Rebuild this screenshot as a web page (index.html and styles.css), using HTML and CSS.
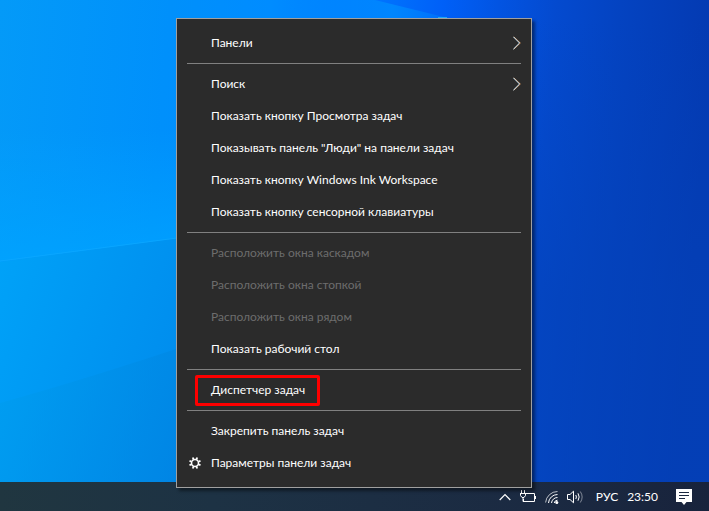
FILE: index.html
```html
<!DOCTYPE html>
<html lang="ru">
<head>
<meta charset="utf-8">
<title>Панель задач</title>
<link rel="stylesheet" href="styles.css">
</head>
<body>
<main class="desktop">
  <svg class="wallpaper" viewBox="0 0 709 482" preserveAspectRatio="none" aria-hidden="true">
    <defs>
      <linearGradient id="base" x1="0" x2="709" y1="0" y2="60" gradientUnits="userSpaceOnUse">
        <stop offset="0" stop-color="#049af8"/>
        <stop offset=".24" stop-color="#0090fb"/>
        <stop offset=".38" stop-color="#008cff"/>
        <stop offset=".5" stop-color="#007aff"/>
        <stop offset=".62" stop-color="#0060f8"/>
        <stop offset=".7" stop-color="#0254e2"/>
        <stop offset=".78" stop-color="#044acf"/>
        <stop offset=".87" stop-color="#0443c1"/>
        <stop offset="1" stop-color="#043ab2"/>
      </linearGradient>
      <linearGradient id="shade" x1="0" x2="0" y1="20" y2="300" gradientUnits="userSpaceOnUse">
        <stop offset="0" stop-color="#0442b8" stop-opacity="0"/>
        <stop offset="1" stop-color="#0442b8" stop-opacity=".6"/>
      </linearGradient>
      <linearGradient id="glow" x1="0" x2="0" y1="130" y2="255" gradientUnits="userSpaceOnUse">
        <stop offset="0" stop-color="#00a4ff" stop-opacity="0"/>
        <stop offset="1" stop-color="#00a4ff" stop-opacity=".75"/>
      </linearGradient>
      <linearGradient id="lower" x1="0" x2="300" y1="250" y2="350" gradientUnits="userSpaceOnUse">
        <stop offset="0" stop-color="#00a2f8"/>
        <stop offset="1" stop-color="#0082e8"/>
      </linearGradient>
      <linearGradient id="floor" x1="0" x2="200" y1="400" y2="460" gradientUnits="userSpaceOnUse">
        <stop offset="0" stop-color="#009cec"/>
        <stop offset="1" stop-color="#007edc"/>
      </linearGradient>
      <linearGradient id="beam" x1="280" x2="440" y1="0" y2="0" gradientUnits="userSpaceOnUse">
        <stop offset="0" stop-color="#0090ff" stop-opacity="0"/>
        <stop offset=".7" stop-color="#008cff" stop-opacity=".8"/>
        <stop offset="1" stop-color="#0088ff" stop-opacity=".4"/>
      </linearGradient>
    </defs>
    <rect width="709" height="482" fill="url(#base)"/>
    <rect x="530" y="20" width="179" height="462" fill="url(#shade)"/>
    <path d="M280 0H375L448 18H280Z" fill="url(#beam)"/>
    <path d="M438 18H447" stroke="#20a8f8" stroke-width="2"/>
    <path d="M0 100H400V210L0 262Z" fill="url(#glow)"/>
    <path d="M0 262L400 209V482H0Z" fill="url(#lower)"/>
    <path d="M0 403Q90 378 200 341V482H0Z" fill="url(#floor)" opacity=".5"/>
    <path d="M0 261L200 235" stroke="#10aaff" stroke-width="1" opacity=".6"/>
  </svg>

  <nav class="menu" aria-label="Меню панели задач">
    <button class="item" type="button"><span class="label">Панели</span>
      <svg class="chevron" viewBox="0 0 8 14"><path d="M.8 .8L7.300 7L.8 13.200" stroke="#f0a060"/><path d="M.3 .8L6.500 7L.3 13.200" stroke="#bfe6ff"/></svg></button>
    <hr class="rule">
    <button class="item" type="button"><span class="label">Поиск</span>
      <svg class="chevron" viewBox="0 0 8 14"><path d="M.8 .8L7.300 7L.8 13.200" stroke="#f0a060"/><path d="M.3 .8L6.500 7L.3 13.200" stroke="#bfe6ff"/></svg></button>
    <button class="item" type="button"><span class="label">Показать кнопку Просмотра задач</span></button>
    <button class="item" type="button"><span class="label">Показывать панель "Люди" на панели задач</span></button>
    <button class="item" type="button"><span class="label">Показать кнопку Windows Ink Workspace</span></button>
    <button class="item" type="button"><span class="label">Показать кнопку сенсорной клавиатуры</span></button>
    <hr class="rule">
    <button class="item" type="button" disabled><span class="label">Расположить окна каскадом</span></button>
    <button class="item" type="button" disabled><span class="label">Расположить окна стопкой</span></button>
    <button class="item" type="button" disabled><span class="label">Расположить окна рядом</span></button>
    <button class="item" type="button"><span class="label">Показать рабочий стол</span></button>
    <hr class="rule">
    <button class="item" type="button"><span class="label marked">Диспетчер задач</span></button>
    <hr class="rule">
    <button class="item" type="button"><span class="label">Закрепить панель задач</span></button>
    <button class="item" type="button">
      <svg class="gear" viewBox="0 0 12 12"><g fill="none" stroke="#fff"><circle cx="6" cy="6" r="3.500" stroke-width="1.600"/><path d="M7.500 2.300L8.200 .5M9.700 4.500L11.500 3.800M9.700 7.500L11.500 8.200M7.500 9.700L8.200 11.500M4.500 9.700L3.800 11.500M2.300 7.500L.5 8.200M2.300 4.500L.5 3.800M4.500 2.300L3.800 .5" stroke-width="1.800"/></g></svg>
      <span class="label">Параметры панели задач</span></button>
  </nav>
</main>

<footer class="taskbar">
  <button class="tray" type="button" aria-label="Скрытые значки">
    <svg width="12" height="8" viewBox="0 0 12 8"><path d="M.7 7L6 1.500L11.300 7" fill="none" stroke="#fff" stroke-width="1.200"/></svg></button>
  <button class="tray" type="button" aria-label="Батарея">
    <svg width="18" height="14" viewBox="0 0 18 14"><g fill="none" stroke="#fff"><path d="M7 3.500H15.500V11.500H4.500V9"/><path d="M16.500 6V9"/><path d="M2.500 0V3M5.500 0V3"/><path d="M1 3.500H7M1.500 3V5.500L3 7.500H5L6.500 5.500V3M4 7V11.500H5"/></g></svg></button>
  <button class="tray" type="button" aria-label="Сеть">
    <svg width="14" height="14" viewBox="0 0 14 14"><g fill="none" stroke="#fff"><path d="M.6 12.500A12 12 0 0 1 12.500 1.500" opacity=".7"/><path d="M3.500 13A9 9 0 0 1 12.500 4.500"/><path d="M6.500 13A6 6 0 0 1 12.500 7.500"/><path d="M9.200 13A3.500 3.500 0 0 1 12.500 10.200"/></g><circle cx="11.800" cy="12.400" r="1.500" fill="#fff"/></svg></button>
  <button class="tray" type="button" aria-label="Громкость">
    <svg width="17" height="14" viewBox="0 0 17 14"><g fill="none" stroke="#fff"><path d="M.5 4.500H3L6.500 1.200V12.800L3 9.500H.5Z"/><path d="M8.800 5Q10 7 8.800 9M11 3.300Q13.300 7 11 10.700"/><path d="M13.300 1.500Q17 7 13.300 12.500" opacity=".45"/></g></svg></button>
  <button class="tray language" type="button">РУС</button>
  <button class="tray" type="button">23:50</button>
  <button class="tray notes" type="button" aria-label="Уведомления">
    <svg width="16" height="16" viewBox="0 0 16 16"><path d="M0 0H16V13H10.500L8 16L5.500 13H0Z" fill="#fff"/><path d="M3 3.500H13M3 6.500H13M3 9.500H9" stroke="#1a2740"/></svg></button>
</footer>
</body>
</html>
```

FILE: styles.css
```css
* {
  box-sizing: border-box;
}

body {
  margin: 0;
  min-height: 100vh;
  display: flex;
  flex-direction: column;
  position: relative;
  overflow: hidden;
  background: #1a2740;
  color: #fff;
  font: 12px/16px Lato, "Noto Sans", sans-serif;
}

button {
  border: 0;
  padding: 0;
  background: none;
  color: inherit;
  font: inherit;
}

.desktop {
  flex: 1;
  display: flex;
}

.wallpaper {
  position: absolute;
  top: 0;
  left: 0;
  width: 100%;
  height: calc(100% - 29px);
}

.menu {
  position: absolute;
  bottom: 23px;
  left: 0;
  right: 1px;
  margin: 0 auto;
  width: 356px;
  padding: 8px 10px;
  border: 1px solid #a0a0a0;
  background: #2b2b2b;
  box-shadow: 3px 3px 3px rgba(0, 0, 0, 0.45);
  z-index: 1;
}

.item {
  display: flex;
  align-items: center;
  position: relative;
  width: 100%;
  height: 32px;
  padding-left: 24px;
  text-align: left;
}

.item:disabled {
  color: #6d6d6d;
}

.label {
  flex: none;
}

.marked {
  margin-left: -16px;
  padding: 4px 12px 5px 13px;
  border: 3px solid #f00;
  border-radius: 2px;
}

.rule {
  height: 1px;
  margin: 4px 0;
  border: 0;
  background: #808080;
}

.chevron {
  width: 8px;
  height: 14px;
  margin-left: auto;
  fill: none;
}

.gear {
  position: absolute;
  left: 2px;
  width: 12px;
  height: 12px;
}

.taskbar {
  display: flex;
  align-items: center;
  justify-content: flex-end;
  gap: 8px;
  height: 29px;
  padding-right: 17px;
  position: relative;
  background: linear-gradient(90deg, #203640, #1d3244 30%, #1b2a42 75%, #18233c);
}

.tray {
  display: flex;
  align-items: center;
}

.language {
  margin: 0 1px 0 4px;
}

.notes {
  margin-left: 10px;
}
```
